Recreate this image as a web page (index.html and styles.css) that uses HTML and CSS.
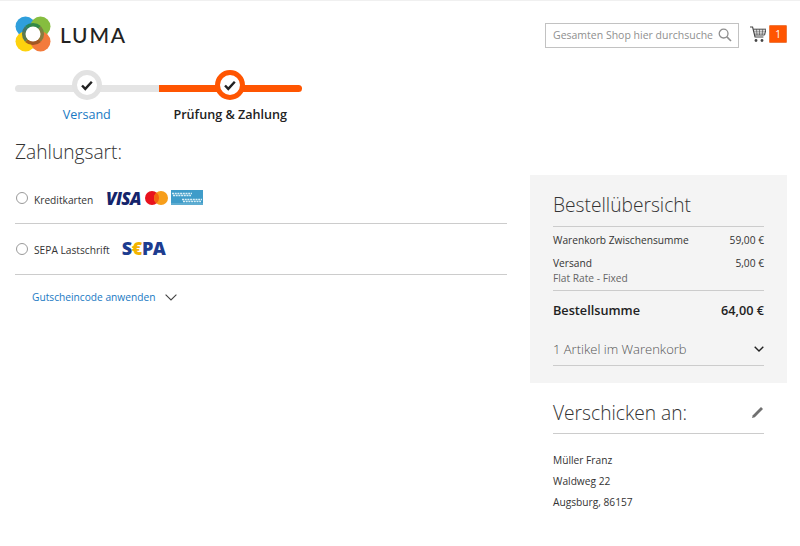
FILE: index.html
```html
<!DOCTYPE html>
<html lang="de">
<head>
<meta charset="utf-8">
<title>Checkout</title>
<link rel="stylesheet" href="styles.css">
</head>
<body>
<header class="header">
  <a class="logo">
    <svg class="logo-mark" width="36" height="36" viewBox="0 0 36 36">
      <circle cx="10.5" cy="10.5" r="10" fill="#2f9fdc"/>
      <circle cx="25.5" cy="10.5" r="10" fill="#86bd3f"/>
      <circle cx="10.5" cy="25.5" r="10" fill="#fdd20e"/>
      <circle cx="25.5" cy="25.5" r="10" fill="#f37b3c"/>
      <g fill="none" stroke-width="4" stroke-opacity=".9">
        <path d="M11.5 11.5A9.5 9.5 0 0 1 24.5 11.5" stroke="#2a8348"/>
        <path d="M24.5 11.5A9.5 9.5 0 0 1 24.5 24.5" stroke="#7c7c40"/>
        <path d="M24.5 24.5A9.5 9.5 0 0 1 11.5 24.5" stroke="#99531f"/>
        <path d="M11.5 24.5A9.5 9.5 0 0 1 11.5 11.5" stroke="#477058"/>
      </g>
      <circle cx="18" cy="18" r="7.5" fill="#fff"/>
    </svg>
    <span class="logo-text">LUMA</span>
  </a>
  <div class="header-tools">
    <div class="search">
      <span class="search-text">Gesamten Shop hier durchsuche</span>
      <svg width="14" height="14" viewBox="0 0 14 14" fill="none" stroke="#8f8f8f" stroke-width="1.3"><circle cx="5.6" cy="5.6" r="4.4"/><path d="M8.9 8.9 13 13" stroke-width="1.6"/></svg>
    </div>
    <div class="cart">
      <svg width="16" height="17" viewBox="0 0 16 17" fill="none" stroke="#444"><path d="M0 1h2.6l2.4 10h8.4" stroke-width="1.1"/><path d="M3.2 3.2H16L14.6 9H4.6" stroke-width="1"/><path d="M3.6 5.2h12M4 7.1h11M6.5 3.2 7 9M9.5 3.2V9M12.7 3.2 12.2 9" stroke-width=".6"/><circle cx="6" cy="14.5" r="1.4" fill="#444" stroke="none"/><circle cx="12" cy="14.5" r="1.4" fill="#444" stroke="none"/></svg>
      <span class="badge">1</span>
    </div>
  </div>
</header>

<ol class="progress">
  <li class="step">
    <span class="track"></span>
    <span class="dot">
      <svg width="12" height="11" viewBox="0 0 14 12"><path d="M1.2 6 5 10 12.6 1.6" fill="none" stroke="#222" stroke-width="2.8"/></svg>
    </span>
    <span class="step-label">Versand</span>
  </li>
  <li class="step step-active">
    <span class="track"></span>
    <span class="dot">
      <svg width="12" height="11" viewBox="0 0 14 12"><path d="M1.2 6 5 10 12.6 1.6" fill="none" stroke="#222" stroke-width="2.8"/></svg>
    </span>
    <span class="step-label">Prüfung &amp; Zahlung</span>
  </li>
</ol>

<main class="main">
  <section class="payment">
    <h2 class="payment-title">Zahlungsart:</h2>
    <div class="method method-cards">
      <span class="radio"></span>
      <span class="method-label">Kreditkarten</span>
      <span class="visa">VISA</span>
      <svg class="mc" width="23" height="14" viewBox="0 0 23 14"><circle cx="7" cy="7" r="7" fill="#e8121d"/><circle cx="16" cy="7" r="7" fill="#f79e1b"/><path d="M11.5 1.6a7 7 0 0 1 0 10.8 7 7 0 0 1 0-10.8Z" fill="#f4640f"/></svg>
      <svg class="amex" width="32" height="15" viewBox="0 0 32 15"><rect width="32" height="15" fill="#3f9cc9"/><path d="M1 3.5h20M2 5.5h18" stroke="#d8eef6" stroke-width="1.3" stroke-dasharray="2 .7"/><path d="M11 9.5h20M12 11.5h18" stroke="#d8eef6" stroke-width="1.3" stroke-dasharray="2 .7"/><path d="M0 14h32" stroke="#7fbcd8"/></svg>
    </div>
    <div class="method method-sepa">
      <span class="radio"></span>
      <span class="method-label">SEPA Lastschrift</span>
      <span class="sepa">S<span class="sepa-euro">€</span>PA</span>
    </div>
    <div class="coupon">
      <span class="coupon-link">Gutscheincode anwenden</span>
      <svg width="12" height="7" viewBox="0 0 12 7" fill="none" stroke="#444" stroke-width="1.1"><path d="M.6.6 6 6 11.4.6"/></svg>
    </div>
  </section>

  <aside class="sidebar">
    <section class="summary">
      <h2 class="summary-title">Bestellübersicht</h2>
      <div class="totals">
        <div class="row row-sub"><span>Warenkorb Zwischensumme</span><span>59,00 €</span></div>
        <div class="row row-ship"><span>Versand</span><span>5,00 €</span></div>
        <div class="ship-note">Flat Rate - Fixed</div>
      </div>
      <div class="row row-grand"><span>Bestellsumme</span><span>64,00 €</span></div>
      <div class="items">
        <span>1 Artikel im Warenkorb</span>
        <svg width="10" height="6" viewBox="0 0 10 6" fill="none" stroke="#222" stroke-width="1.4"><path d="M.7.7 5 5 9.3.7"/></svg>
      </div>
    </section>
    <section class="ship-to">
      <div class="ship-head">
        <h2 class="ship-title">Verschicken an:</h2>
        <svg width="13" height="13" viewBox="0 0 13 13" fill="#707070"><path d="M10 1 12 3 3.8 11.2 1 12 1.8 9.2Z"/></svg>
      </div>
      <address class="address">
        <span>Müller Franz</span>
        <span>Waldweg 22</span>
        <span>Augsburg, 86157</span>
      </address>
    </section>
  </aside>
</main>
</body>
</html>
```
FILE: styles.css
```css
* { box-sizing: border-box; }
html, body { margin: 0; padding: 0; }
body {
  width: 800px;
  height: 546px;
  overflow: hidden;
  background: #fff;
  border-top: 1px solid #f0f0f0;
  font-family: "Open Sans", sans-serif;
  font-size: 10.2px;
  color: #333;
}
h2 { margin: 0; font-weight: 300; }

.header {
  display: flex;
  justify-content: space-between;
  align-items: center;
  height: 51px;
  padding: 15px 13px 0 15px;
}
.logo { display: flex; align-items: center; gap: 9px; }
.logo-text {
  font-family: Lato, sans-serif;
  font-size: 21px;
  letter-spacing: 1.8px;
  color: #222;
  font-weight: 500;
}
.header-tools { display: flex; align-items: center; gap: 11px; }
.search {
  display: flex;
  align-items: center;
  justify-content: space-between;
  width: 194px;
  height: 25px;
  margin-top: 2px;
  padding: 0 6px 0 7px;
  border: 1px solid #c2c2c2;
  background: #fff;
}
.search-text { font-size: 10.5px; color: #8f8f8f; white-space: nowrap; }
.cart { display: flex; align-items: center; gap: 3px; }
.badge {
  width: 18px;
  height: 18px;
  background: #ff5501;
  border: 1px solid #ee7a40;
  color: #fff;
  font-size: 10px;
  display: flex;
  align-items: center;
  justify-content: center;
  border-radius: 1px;
}

.progress {
  display: flex;
  list-style: none;
  margin: 18px 0 0 15px;
  padding: 0;
  width: 287px;
}
.step {
  position: relative;
  flex: 1;
  display: flex;
  flex-direction: column;
  align-items: center;
  height: 55px;
}
.track {
  position: absolute;
  left: 0;
  right: 0;
  top: 15px;
  height: 7px;
  background: #e4e4e4;
  border-radius: 4px 0 0 4px;
}
.dot {
  position: relative;
  width: 30px;
  height: 30px;
  border: 5px solid #e2e2e2;
  border-radius: 50%;
  background: #fff;
  display: flex;
  align-items: center;
  justify-content: center;
}
.step-label { margin-top: 6px; font-size: 12.6px; color: #1979c3; white-space: nowrap; }
.step-active .track { background: #ff5501; border-radius: 0 4px 4px 0; }
.step-active .dot { border-color: #ff5501; }
.step-active .step-label { color: #222; font-weight: 600; }

.main {
  display: grid;
  grid-template-columns: 492px 257px;
  column-gap: 23px;
  margin: 0 0 0 15px;
}
.payment-title { font-size: 19.2px; line-height: 27px; color: #333; margin-top: 13px; }
.method {
  display: flex;
  align-items: center;
  border-bottom: 1px solid #ccc;
  height: 51px;
  padding-left: 1px;
}
.method-cards { margin-top: 15px; height: 44px; padding-bottom: 5px; }
.radio {
  width: 12px;
  height: 12px;
  border: 1px solid #9a9a9a;
  border-radius: 50%;
  background: #fff;
  margin-right: 6px;
  margin-bottom: 2px;
}
.method-sepa .radio { margin-bottom: 0; }
.method-label { color: #333; margin-top: 1px; }
.method-cards .method-label { width: 59px; }
.visa {
  margin-left: 13px;
  font: italic 800 17px/15px "Open Sans", sans-serif;
  color: #14246b;
  letter-spacing: -.6px;
  margin-bottom: 2px;
}
.mc { margin-left: 4px; margin-bottom: 3px; }
.amex { margin-left: 3px; margin-bottom: 3px; }
.sepa {
  margin-left: 12px;
  font: 800 18px/18px "Open Sans", sans-serif;
  color: #1d3c8f;
  letter-spacing: -.4px;
  margin-bottom: 3px;
}
.sepa-euro { color: #f2b400; }
.coupon {
  display: flex;
  align-items: center;
  gap: 10px;
  padding: 15px 0 0 17px;
}
.coupon-link { color: #1979c3; }

.sidebar { display: flex; flex-direction: column; margin-top: 50px; }
.summary {
  height: 208px;
  background: #f4f4f4;
  padding: 16px 23px 0;
}
.summary-title {
  font-size: 19.2px;
  line-height: 27px;
  padding-bottom: 8px;
  border-bottom: 1px solid #ccc;
  color: #333;
}
.totals { border-bottom: 1px solid #ccc; padding: 6px 0 5px; }
.row { display: flex; justify-content: space-between; color: #333; }
.row-ship { margin-top: 9px; }
.ship-note { color: #666; margin-top: 1px; }
.row-grand { font-size: 12.7px; font-weight: 600; color: #222; margin-top: 10px; }
.items {
  display: flex;
  justify-content: space-between;
  align-items: center;
  margin-top: 21px;
  padding-bottom: 7px;
  border-bottom: 1px solid #ccc;
  font-size: 13px;
  font-weight: 300;
  color: #555;
}
.ship-to { padding: 16px 23px 0; }
.ship-head {
  display: flex;
  justify-content: space-between;
  align-items: center;
  border-bottom: 1px solid #ccc;
  padding-bottom: 7px;
}
.ship-title { font-size: 19.2px; line-height: 27px; color: #333; }
.address { font-style: normal; display: flex; flex-direction: column; margin-top: 16px; line-height: 21px; color: #333; }
```
